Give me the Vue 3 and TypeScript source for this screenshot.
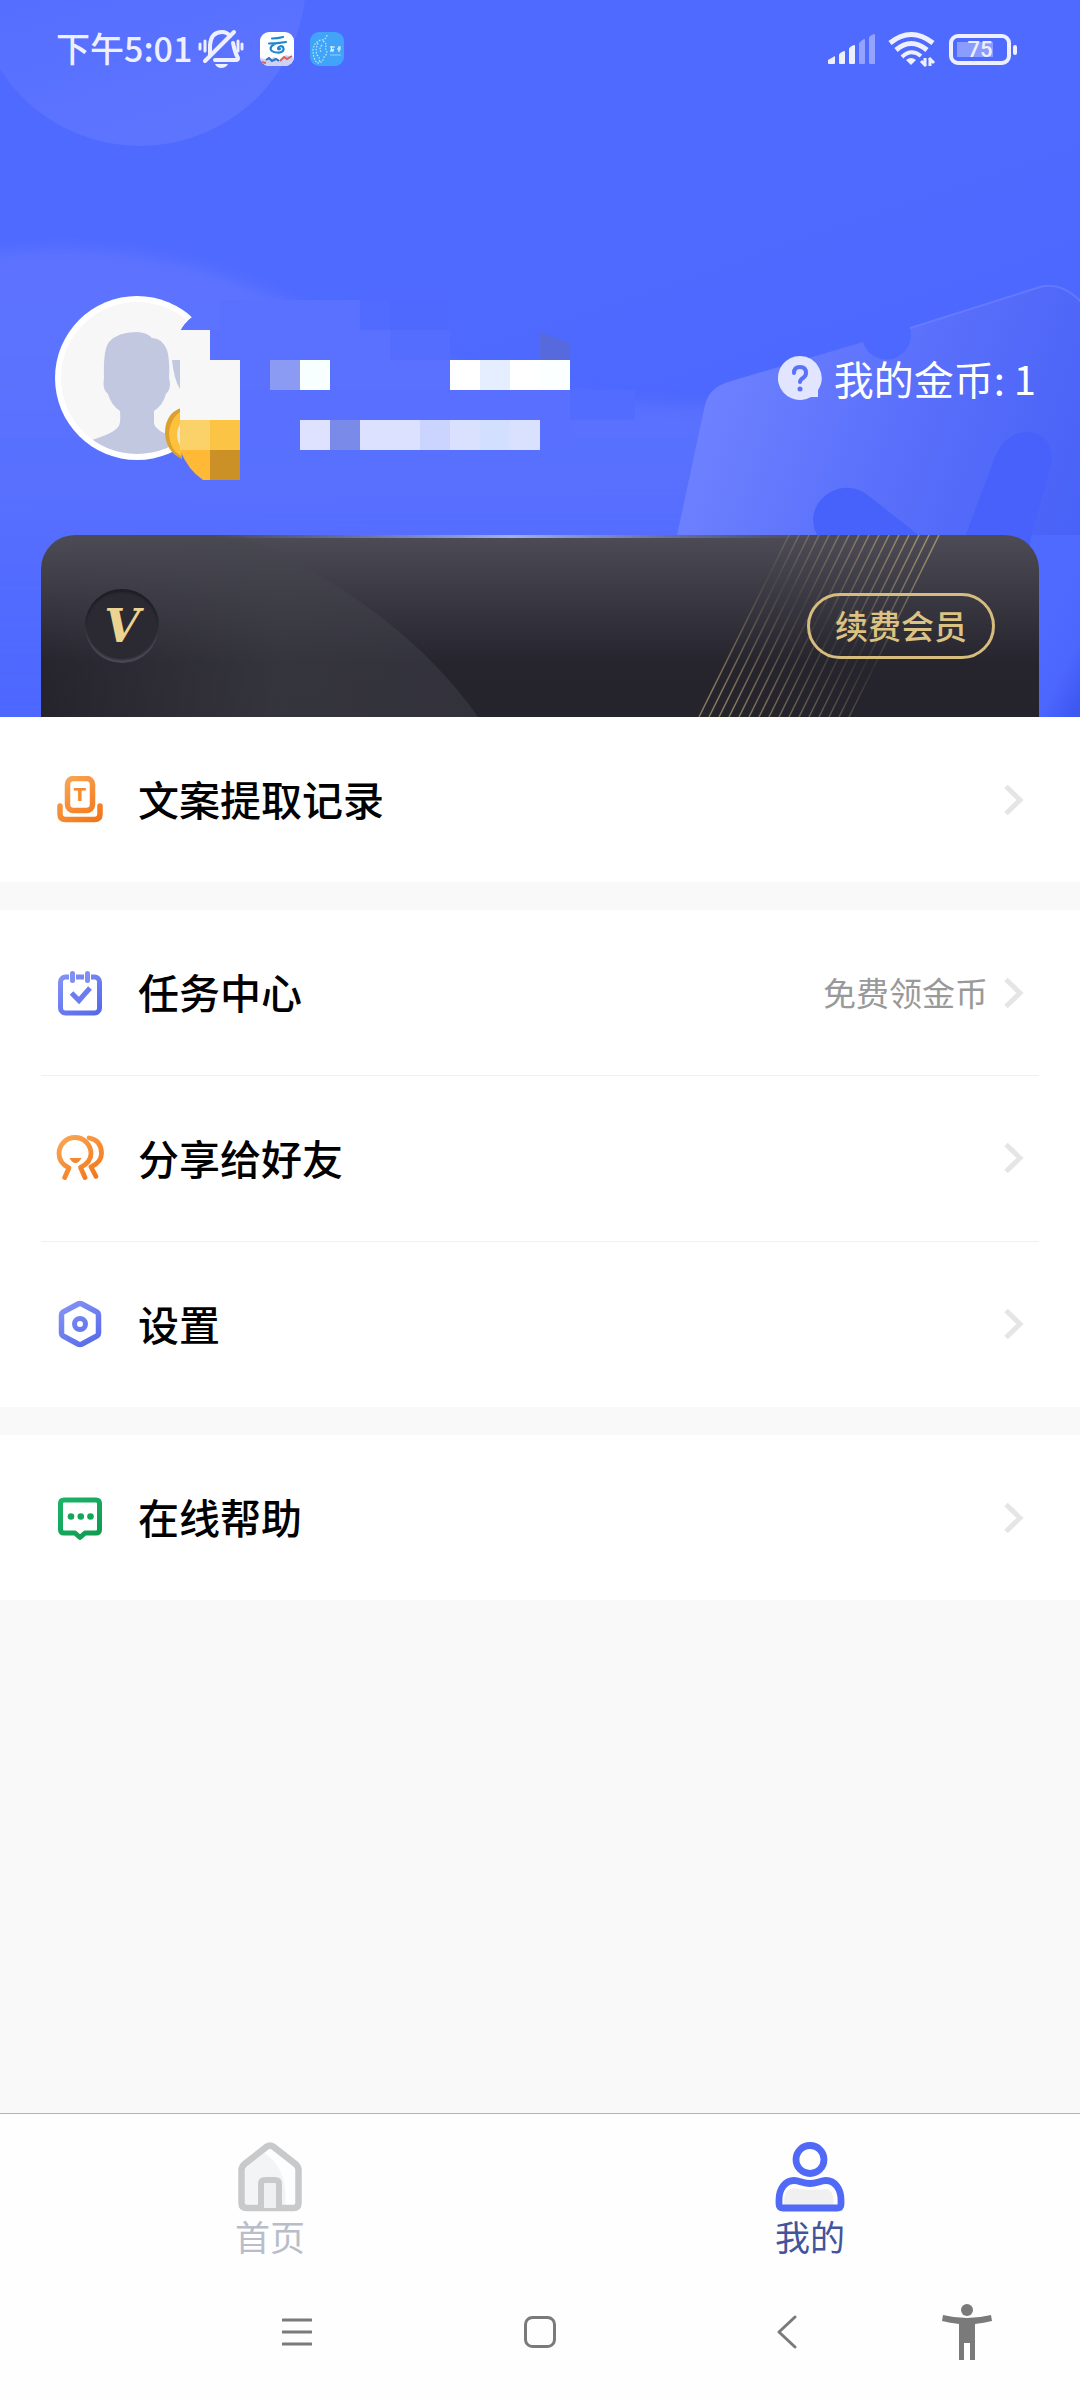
<script setup lang="ts">
import { ref } from 'vue'

interface MenuItem {
  id: string
  label: string
  value?: string
}

interface Block {
  x: number
  y: number
  w: number
  h: number
  fill: string
}

const groups: MenuItem[][] = [
  [{ id: 'extract', label: '文案提取记录' }],
  [
    { id: 'task', label: '任务中心', value: '免费领金币' },
    { id: 'share', label: '分享给好友' },
    { id: 'settings', label: '设置' },
  ],
  [{ id: 'help', label: '在线帮助' }],
]

// Tiles that hide the user's name and account number
const blocks: Block[] = [
  { x: 220, y: 300, w: 140, h: 30, fill: '#5a70ff' },
  { x: 360, y: 300, w: 30, h: 30, fill: '#516aff' },
  { x: 390, y: 300, w: 60, h: 30, fill: '#4f69ff' },
  { x: 210, y: 330, w: 180, h: 30, fill: '#5a70ff' },
  { x: 390, y: 330, w: 60, h: 30, fill: '#556dff' },
  { x: 240, y: 360, w: 210, h: 30, fill: '#5a70ff' },
  { x: 240, y: 390, w: 330, h: 60, fill: '#586fff' },
  { x: 570, y: 390, w: 65, h: 30, fill: '#526cff' },
  { x: 180, y: 330, w: 30, h: 30, fill: '#f7f7f7' },
  { x: 180, y: 360, w: 60, h: 60, fill: '#f7f7f7' },
  { x: 270, y: 360, w: 30, h: 30, fill: '#8b9af3' },
  { x: 300, y: 360, w: 30, h: 30, fill: '#f8ffff' },
  { x: 450, y: 360, w: 30, h: 30, fill: '#ffffff' },
  { x: 480, y: 360, w: 30, h: 30, fill: '#e4eeff' },
  { x: 510, y: 360, w: 30, h: 30, fill: '#ffffff' },
  { x: 540, y: 360, w: 30, h: 30, fill: '#fbffff' },
  { x: 180, y: 420, w: 30, h: 30, fill: '#fbd26a' },
  { x: 210, y: 420, w: 30, h: 30, fill: '#fcc445' },
  { x: 210, y: 450, w: 30, h: 30, fill: '#cb9127' },
  { x: 300, y: 420, w: 30, h: 30, fill: '#dfe2ff' },
  { x: 330, y: 420, w: 30, h: 30, fill: '#7a8ae9' },
  { x: 360, y: 420, w: 60, h: 30, fill: '#dce1ff' },
  { x: 420, y: 420, w: 30, h: 30, fill: '#cbd4ff' },
  { x: 450, y: 420, w: 30, h: 30, fill: '#dae1ff' },
  { x: 480, y: 420, w: 30, h: 30, fill: '#d3dfff' },
  { x: 510, y: 420, w: 30, h: 30, fill: '#dae1ff' },
]

const stripes = Array.from({ length: 16 }, (_, i) => 748 + i * 10)

const activeTab = ref<'home' | 'mine'>('mine')
</script>

<template>
  <div class="page">
    <header class="hero">
      <svg class="hero-bg" viewBox="0 0 1080 717" preserveAspectRatio="none" aria-hidden="true">
        <defs>
          <linearGradient id="bgBase" x1="0.5" y1="0.3" x2="0.85" y2="1">
            <stop offset="0" stop-color="#4f6aff" />
            <stop offset="0.6" stop-color="#4c67fe" />
            <stop offset="1" stop-color="#3d57f2" />
          </linearGradient>
          <linearGradient id="bgBall" x1="0" y1="0" x2="0.3" y2="1">
            <stop offset="0.4" stop-color="#526cff" />
            <stop offset="1" stop-color="#5d74ff" />
          </linearGradient>
          <linearGradient id="bgWave" x1="0" y1="0" x2="0" y2="1">
            <stop offset="0" stop-color="#5f75ff" stop-opacity="0.9" />
            <stop offset="0.5" stop-color="#5970ff" stop-opacity="0.9" />
            <stop offset="1" stop-color="#4d67ff" stop-opacity="0.2" />
          </linearGradient>
          <linearGradient id="ticket" gradientUnits="userSpaceOnUse" x1="690" y1="430" x2="1060" y2="560">
            <stop offset="0" stop-color="#6e81ff" />
            <stop offset="0.5" stop-color="#5a70fb" />
            <stop offset="1" stop-color="#4962f7" />
          </linearGradient>
          <filter id="soft" x="-10%" y="-10%" width="120%" height="120%">
            <feGaussianBlur stdDeviation="7" />
          </filter>
        </defs>
        <rect width="1080" height="717" fill="url(#bgBase)" />
        <circle cx="140" cy="-20" r="166" fill="url(#bgBall)" />
        <path
          d="M-20 255Q130 235 250 285C350 330 450 375 600 398Q680 410 760 405V740H-20Z"
          fill="url(#bgWave)"
          filter="url(#soft)"
        />
        <path
          d="M676 540L705 405Q709 388 728 382L863 342A24 24 0 1 0 910 328L1040 287Q1062 281 1082 303V540Z"
          fill="url(#ticket)"
        />
        <path
          d="M910 328L1040 287Q1062 281 1082 303"
          fill="none"
          stroke="#7085ff"
          stroke-opacity="0.6"
          stroke-width="2"
        />
        <rect x="1030" y="535" width="50" height="182" fill="url(#bgBase)" />
        <path d="M813 518A34 34 0 0 1 870 497L925 540H820Q813 530 813 518Z" fill="#4762fa" />
        <path d="M964 540L995 457Q1006 432 1028 432Q1052 434 1052 462L1030 540Z" fill="#4861fa" />
      </svg>

      <div class="status">
        <div class="status-left">
          <span class="clock">下午5:01</span>
          <svg class="mute" viewBox="0 0 46 40" aria-label="静音">
            <g fill="none" stroke="#eef0ff" stroke-linecap="round">
              <path
                d="M12 26V16Q13 3 24 3Q29 3 32 7M35 14Q37 24 40 29Q40 31 38 31H17"
                stroke-width="4"
                stroke-linejoin="round"
              />
              <path d="M36 3L7 32" stroke-width="4" />
              <path d="M2 15V20M7 12V22M40 12V22M44 15V20" stroke-width="3" />
            </g>
            <path d="M17 35H30Q28 39 23 39Q19 39 17 35Z" fill="#eef0ff" />
          </svg>
          <svg class="app" viewBox="0 0 34 34" aria-label="云应用">
            <defs><clipPath id="appClip"><rect width="34" height="34" rx="9" /></clipPath></defs>
            <g clip-path="url(#appClip)">
              <rect width="34" height="34" fill="#fff" />
              <path
                d="M12 6.500Q18 6.500 23 5M9 11.500Q18 11.500 26 10M17 11Q9 14 11 18Q13 21 20 20.500Q25 19 23 15Q20 13 18 16Q18 18 20 17"
                fill="none"
                stroke="#1f86cf"
                stroke-width="2.200"
                stroke-linecap="round"
              />
              <path d="M0 26L8 28L14 25L20 28L26 23L34 26V34H0Z" fill="#cdd2f1" />
              <path d="M6 28l3-2 3 3 4-2 3 2" fill="none" stroke="#2f73c8" stroke-width="2" />
              <path d="M20 29l4-4 3 2 5-3M1 30l5 1" fill="none" stroke="#e15b62" stroke-width="2" />
            </g>
          </svg>
          <svg class="app" viewBox="0 0 34 34" aria-label="应用">
            <rect width="34" height="34" rx="9" fill="#42a4f8" />
            <g fill="none" stroke="#b9ecff" stroke-width="1.200" stroke-dasharray="1.500 1.500">
              <path d="M17 3Q16 8 11 8Q4 10 3 18Q3 26 7 31Q13 31 14 25Q19 21 15 16Q18 12 13 9" />
              <path d="M8 11Q5 18 7 23Q11 27 9 30M12 13Q8 17 12 21" />
            </g>
            <path
              d="M20 15h5M22 14l-1 5 3-2M21 19h3M28 15h3M27 17h4M29 15v5"
              fill="none"
              stroke="#e9faff"
              stroke-width="1.200"
            />
            <path d="M20 23h11" stroke="#8fd0ff" stroke-width="1" />
          </svg>
        </div>
        <div class="status-right">
          <svg class="signal" viewBox="0 0 48 32" aria-label="信号">
            <g fill="#eef0ff">
              <path d="M0 27L7 23V30Q7 31 6 31H1Q0 31 0 30Z" />
              <path d="M11 22Q11 20 16 18Q17 18 17 19V30Q17 31 16 31H12Q11 31 11 30Z" />
              <path d="M21 16Q21 14 26 12Q27 12 27 13V30Q27 31 26 31H22Q21 31 21 30Z" />
            </g>
            <g fill="#93a3ff">
              <path d="M31 11Q31 9 36 6Q37 6 37 7V30Q37 31 36 31H32Q31 31 31 30Z" />
              <path d="M41 5Q41 3 46 1Q47 1 47 2V30Q47 31 46 31H42Q41 31 41 30Z" />
            </g>
          </svg>
          <svg class="wifi" viewBox="0 0 48 36" aria-label="Wi-Fi">
            <g fill="none" stroke="#eef0ff" stroke-width="5">
              <path d="M2 12Q23 -5 45 12" />
              <path d="M8 19Q23 6 39 19" />
              <path d="M14 26Q23 17 33 25" stroke-width="4" />
            </g>
            <path d="M18 29Q23 25 28 29L23 34Z" fill="#eef0ff" />
            <path d="M37 27V35M38 35l-5-5M42 35V27M41 27l5 5" fill="none" stroke="#eef0ff" stroke-width="3" />
          </svg>
          <div class="battery"><span>75</span></div>
        </div>
      </div>

      <div class="profile">
        <svg class="user" viewBox="50 280 600 200" role="img" aria-label="用户头像和资料">
          <defs>
            <clipPath id="faceClip"><circle cx="137" cy="378" r="76" /></clipPath>
            <clipPath id="cutClip"><path d="M50 290H165L192 317Q184 323 180 331V470H50Z" /></clipPath>
          </defs>
          <rect
            v-for="(b, i) in blocks.slice(0, 8)"
            :key="'t' + i"
            :x="b.x"
            :y="b.y"
            :width="b.w"
            :height="b.h"
            :fill="b.fill"
          />
          <g clip-path="url(#cutClip)">
            <circle cx="137" cy="378" r="82" fill="#fff" />
            <circle cx="137" cy="378" r="76" fill="#f7f7f7" />
            <g clip-path="url(#faceClip)">
              <path
                d="M92 440Q114 433 118 427Q121 424 120 411Q111 405 108 394Q102 389 104 378Q103 350 109 342Q118 332 136 332Q147 332 152 338Q162 338 167 350Q170 360 169 378Q172 388 166 394Q163 405 154 411V424Q156 431 172 436L200 460H80Z"
                fill="#c2c8e0"
              />
            </g>
          </g>
          <path d="M172 360H180V389Q174 380 172 360Z" fill="#c2c8e0" />
          <path d="M188 406Q165 410 165 433Q166 452 182 459V424Q182 414 188 406Z" fill="#dba12e" />
          <path d="M187 408Q170 415 169 434Q170 450 181 456V424Q182 415 187 408Z" fill="#fdc13c" />
          <path d="M180 424Q174 434 180 446Z" fill="#e9e6de" />
          <path d="M180 450H210V480H203Q188 470 180 450Z" fill="#ffb936" />
          <path d="M540 332L570 343V360H540Z" fill="#566ade" />
          <rect
            v-for="(b, i) in blocks.slice(8)"
            :key="'b' + i"
            :x="b.x"
            :y="b.y"
            :width="b.w"
            :height="b.h"
            :fill="b.fill"
          />
        </svg>
        <a class="coins" href="#coins">
          <svg viewBox="0 0 44 44" aria-hidden="true">
            <path d="M22 0A22 22 0 0 1 40 34V41H33A22 22 0 1 1 22 0Z" fill="#e1e5ff" />
            <path
              d="M16 17Q16 11 22 11Q28 11 28 17Q28 20 25 22Q22 24 22 26"
              fill="none"
              stroke="#5b72f8"
              stroke-width="4"
              stroke-linecap="round"
            />
            <circle cx="22" cy="33" r="2.500" fill="#5b72f8" />
          </svg>
          <span>我的金币: 1</span>
        </a>
      </div>

      <section class="vip">
        <svg class="vip-bg" viewBox="0 0 998 182" preserveAspectRatio="none" aria-hidden="true">
          <defs>
            <linearGradient id="vipBase" x1="0" y1="0" x2="0" y2="1">
              <stop offset="0" stop-color="#4d4c56" />
              <stop offset="0.7" stop-color="#26252e" />
              <stop offset="1" stop-color="#25242d" />
            </linearGradient>
            <linearGradient id="vipArc" x1="0" y1="0" x2="1" y2="0">
              <stop offset="0" stop-color="#45454d" stop-opacity="0" />
              <stop offset="0.55" stop-color="#45454d" stop-opacity="0.5" />
              <stop offset="1" stop-color="#40404a" stop-opacity="0.5" />
            </linearGradient>
            <linearGradient id="vipStripe" gradientUnits="userSpaceOnUse" x1="700" y1="182" x2="870" y2="0">
              <stop offset="0" stop-color="#c7b078" stop-opacity="0.6" />
              <stop offset="0.5" stop-color="#c7b078" stop-opacity="0.08" />
              <stop offset="1" stop-color="#c7b078" stop-opacity="0.65" />
            </linearGradient>
            <linearGradient id="vipGlow" x1="0" y1="0" x2="1" y2="0">
              <stop offset="0" stop-color="#6f83f5" stop-opacity="0" />
              <stop offset="0.5" stop-color="#a3b0f0" />
              <stop offset="1" stop-color="#6f83f5" stop-opacity="0" />
            </linearGradient>
          </defs>
          <rect width="998" height="182" fill="url(#vipBase)" />
          <path d="M0 0H200Q360 72 437 182H0Z" fill="url(#vipArc)" />
          <path
            v-for="x in stripes"
            :key="x"
            :d="`M${x} 0L${x - 90} 182`"
            stroke="url(#vipStripe)"
            stroke-width="1.500"
          />
          <rect x="170" width="600" height="3" fill="url(#vipGlow)" />
        </svg>
        <span class="vip-badge">V</span>
        <button class="vip-btn" type="button">续费会员</button>
      </section>
    </header>

    <main class="menu">
      <nav v-for="(group, gi) in groups" :key="gi" class="group">
        <a v-for="item in group" :key="item.id" class="row" :href="'#' + item.id">
          <svg class="row-icon" viewBox="0 0 48 48" aria-hidden="true">
            <defs>
              <linearGradient :id="'o-' + item.id" gradientUnits="userSpaceOnUse" x1="6" y1="0" x2="40" y2="48">
                <stop offset="0" stop-color="#f8a858" />
                <stop offset="1" stop-color="#f37416" />
              </linearGradient>
              <linearGradient :id="'b-' + item.id" gradientUnits="userSpaceOnUse" x1="6" y1="0" x2="40" y2="48">
                <stop offset="0" stop-color="#8896f4" />
                <stop offset="1" stop-color="#5468ea" />
              </linearGradient>
              <linearGradient :id="'g-' + item.id" gradientUnits="userSpaceOnUse" x1="6" y1="0" x2="40" y2="48">
                <stop offset="0" stop-color="#1bb56b" />
                <stop offset="1" stop-color="#10994f" />
              </linearGradient>
            </defs>
            <g v-if="item.id === 'extract'" fill="none" :stroke="`url(#o-${item.id})`" stroke-width="5.500">
              <rect x="11.500" y="2.500" width="25" height="32" rx="6" />
              <path d="M4 30V38Q4 43.500 9.500 43.500H38.500Q44 43.500 44 38V30" stroke-linecap="round" />
              <text x="24" y="25" text-anchor="middle" class="t-mark">T</text>
            </g>
            <g v-else-if="item.id === 'task'" fill="none" :stroke="`url(#b-${item.id})`" stroke-width="5">
              <rect x="4.500" y="8" width="39" height="36" rx="5" />
              <path d="M16.500 3V14M31.500 3V14" stroke="#fff" stroke-width="7" />
              <path d="M16.500 4.500V11.500M31.500 4.500V11.500" stroke="#7f8ff3" stroke-linecap="round" />
              <path d="M15.500 24L23 31.500L34 19" stroke="#6b7cf0" />
            </g>
            <g
              v-else-if="item.id === 'share'"
              fill="none"
              :stroke="`url(#o-${item.id})`"
              stroke-width="4.800"
              stroke-linecap="round"
              stroke-linejoin="round"
            >
              <path d="M8.700 43.500L13 34Q3 29 3 19.500A16 16 0 0 1 35 19.500Q35 28 24.500 33.500L29 43.500" />
              <path d="M33 4Q45.500 6 45.500 19.500Q45.500 28 35 33L40 42.500" />
              <path d="M13.500 24H25.500Q23 29 19.500 29Q16 29 13.500 24Z" fill="#f5872c" stroke="none" />
            </g>
            <g v-else-if="item.id === 'settings'" fill="none" :stroke="`url(#b-${item.id})`" stroke-width="5.500">
              <path
                d="M22 4Q24 3 26 4L41 12Q42.500 13 42.500 15V33Q42.500 35 41 36L26 44Q24 45 22 44L7 36Q5.500 35 5.500 33V15Q5.500 13 7 12Z"
              />
              <circle cx="24" cy="24" r="5.500" stroke-width="5" />
            </g>
            <g v-else fill="none" :stroke="`url(#g-${item.id})`" stroke-width="5">
              <path
                d="M8 6H40Q43.500 6 43.500 9.500V35.500Q43.500 39 40 39H29L24 43.500L19 39H8Q4.500 39 4.500 35.500V9.500Q4.500 6 8 6Z"
                stroke-linejoin="round"
              />
              <g fill="#14a65b" stroke="none">
                <circle cx="15" cy="22.500" r="3.300" />
                <circle cx="24.800" cy="22.500" r="3.300" />
                <circle cx="34.500" cy="22.500" r="3.300" />
              </g>
            </g>
          </svg>
          <span class="row-label">{{ item.label }}</span>
          <span v-if="item.value" class="row-value">{{ item.value }}</span>
          <svg class="chevron" viewBox="0 0 20 32" aria-hidden="true">
            <path d="M2 2.500L16 16L2 29.500" fill="none" stroke="#e5e5e5" stroke-width="5" />
          </svg>
        </a>
      </nav>
    </main>

    <footer class="bottom">
      <div class="tabs">
        <button type="button" class="tab" :class="{ active: activeTab === 'home' }" @click="activeTab = 'home'">
          <svg viewBox="0 0 70 70" aria-hidden="true">
            <path d="M6.500 25L28 10Q54 26 50 66H6.500Z" fill="#f3f4f6" />
            <path
              d="M32 4.500Q35 2.500 38 4.500L61 22.500Q63.500 25 63.500 28V61Q63.500 66 58.500 66H11.500Q6.500 66 6.500 61V28Q6.500 25 9 22.500Z"
              fill="none"
              stroke="#c8c9cb"
              stroke-width="6.500"
            />
            <path d="M26 66V42Q26 38 30 38H40Q44 38 44 42V66" fill="#eef0f2" stroke="#c8c9cb" stroke-width="6" />
          </svg>
          <span>首页</span>
        </button>
        <button type="button" class="tab" :class="{ active: activeTab === 'mine' }" @click="activeTab = 'mine'">
          <svg viewBox="0 0 70 70" aria-hidden="true">
            <circle cx="35" cy="17.500" r="14" fill="#fff" stroke="#5069f6" stroke-width="6.800" />
            <path d="M9 64Q8 48 18 46Q34 49 52 47Q60 50 58 64Z" fill="#f0f0f0" />
            <path
              d="M4 58C4 47 10 38.500 19 38.500C25 38.500 28 41.500 35 41.500C42 41.500 45 38.500 51 38.500C60 38.500 66 47 66 58V62Q66 66 62 66H8Q4 66 4 62Z"
              fill="none"
              stroke="#5069f6"
              stroke-width="6.800"
            />
          </svg>
          <span>我的</span>
        </button>
      </div>
      <div class="sysnav">
        <button type="button" class="sys recents" aria-label="最近任务">
          <svg width="30" height="32" viewBox="0 0 30 32">
            <path d="M1 4H29M1 16H29M1 28H29" stroke="#7a7a7a" stroke-width="3" stroke-linecap="round" />
          </svg>
        </button>
        <button type="button" class="sys" aria-label="主屏幕">
          <svg width="32" height="32" viewBox="0 0 32 32">
            <rect x="1.500" y="1.500" width="29" height="29" rx="7" fill="none" stroke="#7a7a7a" stroke-width="3" />
          </svg>
        </button>
        <button type="button" class="sys" aria-label="返回">
          <svg width="20" height="34" viewBox="0 0 20 34">
            <path d="M18 2L2 17L18 32" fill="none" stroke="#7a7a7a" stroke-width="3" stroke-linecap="round" stroke-linejoin="round" />
          </svg>
        </button>
        <button type="button" class="sys" aria-label="无障碍">
          <svg width="50" height="56" viewBox="0 0 50 56">
            <circle cx="25" cy="6" r="6" fill="#7a7a7a" />
            <path d="M1 11Q25 17 49 11L50 17Q42 19 33 20V56H28V39H22V56H17V20Q8 19 0 17Z" fill="#7a7a7a" />
          </svg>
        </button>
      </div>
    </footer>
  </div>
</template>

<style>
body {
  margin: 0;
  background: #f9f9f9;
}
</style>

<style scoped>
.page {
  display: flex;
  flex-direction: column;
  min-height: 100vh;
  background: #f9f9f9;
  font-family: 'Noto Sans CJK SC', 'Noto Sans', sans-serif;
}
.page * {
  box-sizing: border-box;
}
svg {
  display: block;
  flex: none;
}
button {
  margin: 0;
  padding: 0;
  border: 0;
  background: none;
  font: inherit;
}
a {
  color: inherit;
  text-decoration: none;
}

.hero {
  position: relative;
  overflow: hidden;
  background: #4f6aff;
}
.hero-bg,
.vip-bg {
  position: absolute;
  inset: 0;
  width: 100%;
  height: 100%;
}
.status,
.profile,
.vip {
  position: relative;
}

.status {
  display: flex;
  justify-content: space-between;
  align-items: center;
  height: 98px;
  padding: 0 69px 0 56px;
}
.status-left,
.status-right {
  display: flex;
  align-items: center;
}
.clock {
  padding-bottom: 2px;
  color: #eef0ff;
  font-size: 34px;
  font-weight: 500;
  line-height: 40px;
}
.mute {
  width: 46px;
  height: 40px;
  margin-left: 6px;
}
.app {
  width: 34px;
  height: 34px;
  margin-left: 16px;
}
.signal {
  width: 48px;
  height: 32px;
}
.wifi {
  width: 48px;
  height: 36px;
  margin-left: 12px;
}
.battery {
  position: relative;
  display: flex;
  align-items: center;
  justify-content: center;
  width: 62px;
  height: 31px;
  margin-left: 13px;
  border: 4px solid #eef0ff;
  border-radius: 9px;
  background: linear-gradient(90deg, #8b9cff 36px, transparent 36px) 4px 4px / 100% 15px no-repeat;
  color: #eef0ff;
  font: 500 22px/23px Roboto, 'Noto Sans', sans-serif;
}
.battery::after {
  position: absolute;
  top: 7px;
  right: -10px;
  width: 4px;
  height: 10px;
  border-radius: 2px;
  background: #eef0ff;
  content: '';
}

.profile {
  display: flex;
  align-items: center;
  justify-content: space-between;
  padding: 182px 44px 55px 50px;
}
.user {
  width: 600px;
  height: 200px;
}
.coins {
  display: flex;
  align-items: center;
  gap: 12px;
  margin-top: -4px;
  color: #fff;
  font-size: 40px;
  line-height: 48px;
  white-space: nowrap;
}
.coins svg {
  width: 44px;
  height: 44px;
}

.vip {
  display: flex;
  align-items: center;
  justify-content: space-between;
  height: 182px;
  margin: 0 41px;
  padding: 0 44px;
  overflow: hidden;
  border-radius: 34px 34px 0 0;
}
.vip-badge {
  position: relative;
  width: 74px;
  height: 74px;
  border-radius: 50%;
  background: #2b2a33;
  box-shadow: inset 0 3px 2px #1f1e26, inset 0 -3px 2px #4a4953;
  color: #edd391;
  font: italic 700 46px/74px 'DejaVu Serif', serif;
  text-align: center;
}
.vip-btn {
  position: relative;
  height: 66px;
  padding: 0 25px 2px;
  border: 3px solid #d6bc7d;
  border-radius: 33px;
  color: #dcc283;
  font-size: 33px;
  font-weight: 500;
  line-height: 56px;
}

.menu {
  display: flex;
  flex-direction: column;
  gap: 28px;
}
.group {
  background: #fff;
}
.row {
  position: relative;
  display: flex;
  align-items: center;
  height: 165px;
  padding: 0 56px;
  color: #000;
}
.row + .row {
  height: 166px;
}
.row + .row::before {
  position: absolute;
  top: 0;
  right: 41px;
  left: 41px;
  height: 1px;
  background: #f0f0f0;
  content: '';
}
.row-icon {
  width: 48px;
  height: 48px;
  margin-right: 34px;
}
.t-mark {
  fill: #f58a32;
  stroke: none;
  font: 700 18px 'DejaVu Sans', sans-serif;
}
.row-label {
  flex: 1;
  padding-bottom: 3px;
  font-size: 41px;
  font-weight: 500;
  line-height: 56px;
}
.row-value {
  margin-right: 16px;
  padding-bottom: 2px;
  color: #999;
  font-size: 33px;
  line-height: 48px;
}
.chevron {
  width: 20px;
  height: 32px;
}

.bottom {
  margin-top: auto;
  border-top: 1px solid #b4b4b4;
  background: #fefefe;
}
.tabs {
  display: flex;
}
.tab {
  display: flex;
  flex: 1;
  flex-direction: column;
  align-items: center;
  padding-top: 28px;
  color: #b9bdc9;
  font-size: 35px;
  line-height: 48px;
}
.tab svg {
  width: 70px;
  height: 70px;
}
.tab.active {
  color: #42549c;
}
.sysnav {
  display: grid;
  grid-template-columns: 175fr 244fr 242fr 252fr 108fr 59fr;
  height: 136px;
  margin-top: 4px;
}
.sys {
  display: flex;
  align-items: center;
  justify-content: center;
}
.recents {
  grid-column: 2;
}
</style>
